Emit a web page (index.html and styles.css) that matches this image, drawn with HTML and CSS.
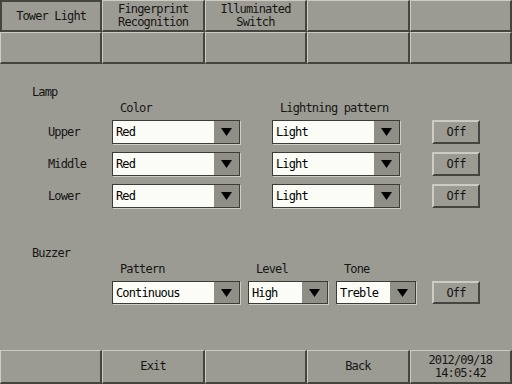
FILE: index.html
```html
<!DOCTYPE html>
<html lang="en">
<head>
    <meta charset="UTF-8">
    <title>Tower Light</title>
    <link rel="stylesheet" href="styles.css">
</head>
<body>
<div class="screen">
    <div class="tabs">
        <div class="cell selected">Tower Light</div>
        <div class="cell">Fingerprint<br>Recognition</div>
        <div class="cell">Illuminated<br>Switch</div>
        <div class="cell"></div>
        <div class="cell"></div>
        <div class="cell"></div>
        <div class="cell"></div>
        <div class="cell"></div>
        <div class="cell"></div>
        <div class="cell"></div>
    </div>

    <div class="main">
        <div class="group-title">Lamp</div>
        <div class="lamp-grid">
            <div></div>
            <div class="col-head">Color</div>
            <div></div>
            <div class="col-head">Lightning pattern</div>
            <div></div>
            <div></div>

            <div class="row-label">Upper</div>
            <div class="dropdown"><span class="value">Red</span><span class="arrow"><svg width="11" height="8" viewBox="0 0 11 8"><polygon points="0,0 11,0 5.5,8" fill="#000"/></svg></span></div>
            <div></div>
            <div class="dropdown"><span class="value">Light</span><span class="arrow"><svg width="11" height="8" viewBox="0 0 11 8"><polygon points="0,0 11,0 5.5,8" fill="#000"/></svg></span></div>
            <div></div>
            <div class="btn">Off</div>

            <div class="row-label">Middle</div>
            <div class="dropdown"><span class="value">Red</span><span class="arrow"><svg width="11" height="8" viewBox="0 0 11 8"><polygon points="0,0 11,0 5.5,8" fill="#000"/></svg></span></div>
            <div></div>
            <div class="dropdown"><span class="value">Light</span><span class="arrow"><svg width="11" height="8" viewBox="0 0 11 8"><polygon points="0,0 11,0 5.5,8" fill="#000"/></svg></span></div>
            <div></div>
            <div class="btn">Off</div>

            <div class="row-label">Lower</div>
            <div class="dropdown"><span class="value">Red</span><span class="arrow"><svg width="11" height="8" viewBox="0 0 11 8"><polygon points="0,0 11,0 5.5,8" fill="#000"/></svg></span></div>
            <div></div>
            <div class="dropdown"><span class="value">Light</span><span class="arrow"><svg width="11" height="8" viewBox="0 0 11 8"><polygon points="0,0 11,0 5.5,8" fill="#000"/></svg></span></div>
            <div></div>
            <div class="btn">Off</div>
        </div>

        <div class="group-title buzzer-title">Buzzer</div>
        <div class="buzzer-grid">
            <div></div>
            <div class="col-head">Pattern</div>
            <div class="col-head">Level</div>
            <div class="col-head">Tone</div>
            <div></div>

            <div></div>
            <div class="dropdown"><span class="value">Continuous</span><span class="arrow"><svg width="11" height="8" viewBox="0 0 11 8"><polygon points="0,0 11,0 5.5,8" fill="#000"/></svg></span></div>
            <div class="dropdown"><span class="value">High</span><span class="arrow"><svg width="11" height="8" viewBox="0 0 11 8"><polygon points="0,0 11,0 5.5,8" fill="#000"/></svg></span></div>
            <div class="dropdown"><span class="value">Treble</span><span class="arrow"><svg width="11" height="8" viewBox="0 0 11 8"><polygon points="0,0 11,0 5.5,8" fill="#000"/></svg></span></div>
            <div class="btn off-btn">Off</div>
        </div>
    </div>

    <div class="footer">
        <div class="cell"></div>
        <div class="cell">Exit</div>
        <div class="cell"></div>
        <div class="cell">Back</div>
        <div class="cell clock">2012/09/18<br>14:05:42</div>
    </div>
</div>
</body>
</html>
```

FILE: styles.css
```css
* {
    box-sizing: border-box;
}

body {
    margin: 0;
    background: #9c9b93;
    font-family: "DejaVu Sans Mono", "Liberation Mono", monospace;
    font-size: 12px;
    letter-spacing: -0.85px;
    color: #161614;
}

.screen {
    width: 512px;
    height: 384px;
    display: flex;
    flex-direction: column;
}

/* top tabs and bottom bar share the same bevelled cells */
.tabs {
    display: grid;
    grid-template-columns: repeat(5, 1fr);
    grid-auto-rows: 32px;
}

.footer {
    display: grid;
    grid-template-columns: repeat(5, 1fr);
    height: 34px;
}

.cell {
    display: flex;
    align-items: center;
    justify-content: center;
    text-align: center;
    line-height: 13px;
    border-top: 1px solid #cdccc4;
    border-left: 1px solid #cdccc4;
    border-right: 2px solid #45443f;
    border-bottom: 2px solid #45443f;
}

.cell.selected {
    border: 2px solid #45443f;
}

.main {
    flex: 1;
    padding: 20px 0 0 32px;
}

.group-title {
    line-height: 16px;
}

.buzzer-title {
    margin-top: 37px;
}

.lamp-grid {
    display: grid;
    grid-template-columns: 64px 128px 32px 128px 32px 48px;
    grid-template-rows: 12px repeat(3, 24px);
    row-gap: 8px;
    padding-left: 16px;
}

.lamp-grid > :nth-child(-n+6) {
    margin-bottom: -4px;
}

.buzzer-grid {
    display: grid;
    grid-template-columns: 72px 128px 80px 80px 56px;
    grid-template-rows: 16px 23px;
    column-gap: 8px;
    row-gap: 4px;
}

.off-btn {
    margin-left: 8px;
}

.col-head {
    padding-left: 8px;
    line-height: 16px;
    white-space: nowrap;
}

.row-label {
    display: flex;
    align-items: center;
}

.dropdown {
    display: flex;
    border: 1px solid #3c3b37;
    box-shadow: 1px 1px 0 #cfcec6;
    background: #fbfcf6;
}

.dropdown .value {
    flex: 1;
    display: flex;
    align-items: center;
    padding-left: 3px;
    color: #000;
}

.dropdown .arrow {
    width: 25px;
    display: flex;
    align-items: center;
    justify-content: center;
    background: #8f8e87;
}

.btn {
    display: flex;
    align-items: center;
    justify-content: center;
    border-top: 2px solid #cdccc4;
    border-left: 2px solid #cdccc4;
    border-right: 2px solid #45443f;
    border-bottom: 2px solid #45443f;
}
```
